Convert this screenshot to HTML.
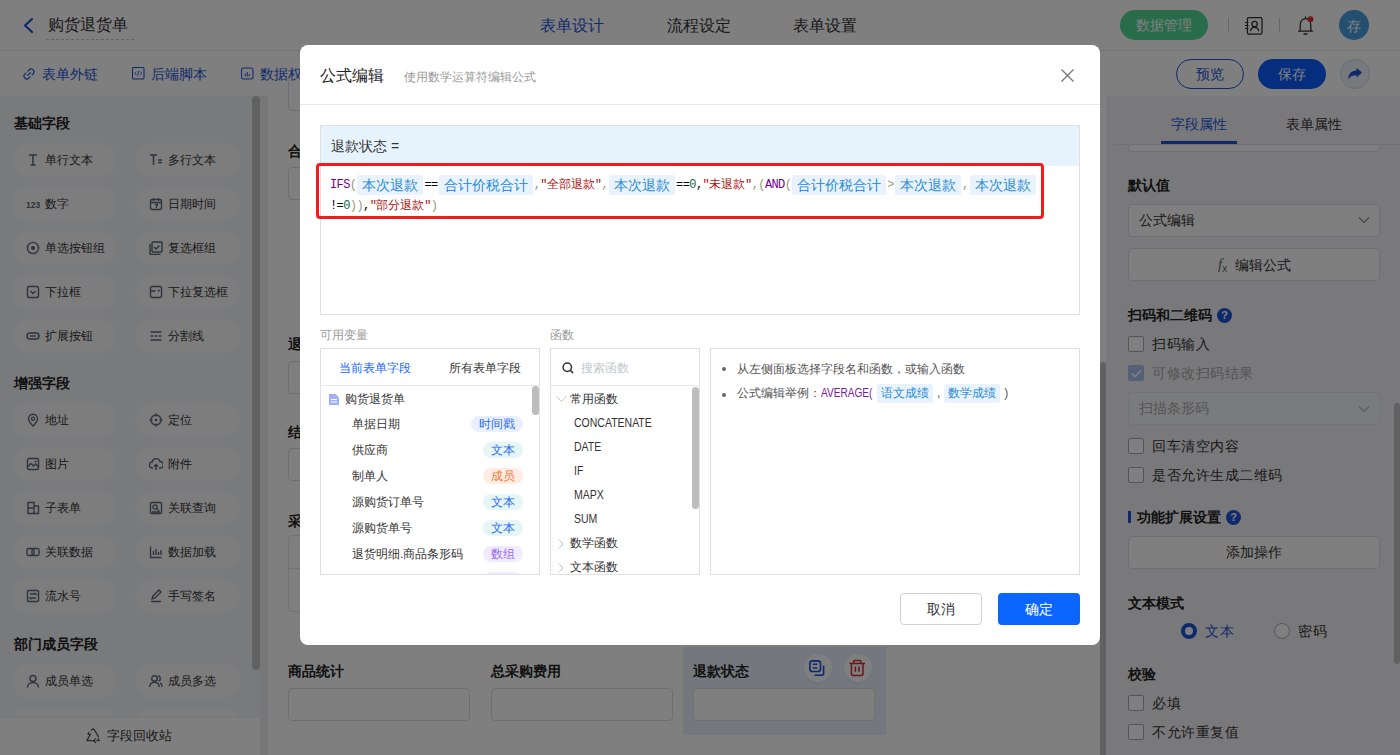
<!DOCTYPE html>
<html><head><meta charset="utf-8">
<style>
*{box-sizing:border-box;margin:0;padding:0}
html,body{width:1400px;height:755px;overflow:hidden;background:#fff;font-family:"Liberation Sans",sans-serif;color:#333}
.a{position:absolute}
svg{display:block}
/* header */
#hdr{left:0;top:0;width:1400px;height:51px;background:#fff;border-bottom:1px solid #e6e6e6}
#tb{left:0;top:51px;width:1400px;height:45px;background:#fff}
.lnk{font-size:14px;color:#1d55d8;line-height:20px}
/* sidebar */
#side{left:0;top:96px;width:268px;height:659px;background:#f2f4f7}
.sh{font-size:14px;font-weight:bold;color:#222;line-height:16px}
.pill{width:105px;height:34px;border-radius:17px;background:#fbfbfc;font-size:12px;color:#333;line-height:34px}
.pill .ic{position:absolute;left:14px;top:10px;width:14px;height:14px}
.pill span{position:absolute;left:33px;top:0}
/* canvas */
#canvas{left:268px;top:96px;width:838px;height:659px;background:#fff}
.lbl{font-size:14px;font-weight:bold;color:#222;line-height:16px}
.inp{border:1px solid #dcdfe6;border-radius:4px;height:33px}
/* right */
#rp{left:1106px;top:96px;width:294px;height:659px;background:#f2f3f6}
.rt{font-size:14px;font-weight:bold;color:#222;line-height:16px}
.cb{width:16px;height:16px;border:1px solid #a8abb2;border-radius:2px;background:#fff}
.ct{font-size:14px;letter-spacing:0.5px;color:#333;line-height:16px}
#mask{left:0;top:0;width:1400px;height:755px;background:rgba(0,0,0,0.5)}
/* modal */
#modal{left:300px;top:45px;width:800px;height:600px;background:#fff;border-radius:8px;overflow:hidden}
.m{position:absolute}
.mono{font-family:"Liberation Mono",monospace;font-size:12px;letter-spacing:-0.6px}
.tok{display:inline-block;letter-spacing:0;margin:0 1px;background:#e8f3fd;color:#2a8ad4;font-family:"Liberation Sans",sans-serif;font-size:14px;height:20px;line-height:20px;padding:0 5px;border-radius:2px;vertical-align:top}
.kw{color:#770088}.br{color:#999977}.st{color:#aa1111}.nu{color:#116644}
.tag{position:absolute;right:16px;height:16px;line-height:16px;font-size:12px;border-radius:8px;padding:0 8px}
.vi{position:absolute;left:31px;font-size:12px;color:#333;line-height:16px}
.fi{position:absolute;left:23px;font-size:12px;color:#333;line-height:16px}
</style></head><body>

<!-- HEADER -->
<div id="hdr" class="a">
  <svg class="a" style="left:22px;top:17px" width="12" height="17" viewBox="0 0 12 17"><path d="M10 2 L3 8.5 L10 15" fill="none" stroke="#1d55d8" stroke-width="2.2" stroke-linecap="round" stroke-linejoin="round"/></svg>
  <div class="a" style="left:48px;top:14px;font-size:16px;line-height:22px;color:#333">购货退货单</div>
  <div class="a" style="left:46px;top:39px;width:88px;border-top:1px dashed #c8c8c8"></div>
  <div class="a" style="left:540px;top:15px;font-size:16px;line-height:22px;color:#1d55d8">表单设计</div>
  <div class="a" style="left:667px;top:15px;font-size:16px;line-height:22px;color:#333">流程设定</div>
  <div class="a" style="left:793px;top:15px;font-size:16px;line-height:22px;color:#333">表单设置</div>
  <div class="a" style="left:1120px;top:10px;width:88px;height:30px;border-radius:15px;background:#52d895;color:#fff;font-size:14px;line-height:30px;text-align:center">数据管理</div>
  <div class="a" style="left:1228px;top:18px;width:1px;height:14px;background:#ccc"></div>
  <svg class="a" style="left:1244px;top:16px" width="20" height="20" viewBox="0 0 20 20"><rect x="3.4" y="1.6" width="14.6" height="16.6" rx="1.6" fill="none" stroke="#333" stroke-width="1.3"/><circle cx="10.6" cy="8" r="2.7" fill="none" stroke="#333" stroke-width="1.3"/><path d="M6.4 15.2c0.4-2.6 2-3.8 4.2-3.8s3.8 1.2 4.2 3.8" fill="none" stroke="#333" stroke-width="1.3"/><path d="M1 6.5h3.4M1 9.5h3.4M1 12.5h3.4" stroke="#333" stroke-width="1.2"/></svg>
  <div class="a" style="left:1279px;top:18px;width:1px;height:14px;background:#ccc"></div>
  <svg class="a" style="left:1296px;top:15px" width="20" height="20" viewBox="0 0 20 20"><path d="M4.2 16V9.8C4.2 6.2 6.4 3.6 9.5 3.6s5.3 2.6 5.3 6.2V16M2.6 16.2h13.8M9.5 1.8v1.6M8 19h3" fill="none" stroke="#333" stroke-width="1.3" stroke-linecap="round"/><circle cx="14.5" cy="4.2" r="3" fill="#e0332d"/></svg>
  <div class="a" style="left:1339px;top:10px;width:30px;height:30px;border-radius:15px;background:#4a9fe0;color:#fff;font-size:14px;line-height:32px;text-align:center">存</div>
</div>

<!-- TOOLBAR -->
<div id="tb" class="a">
  <svg class="a" style="left:22px;top:16px" width="14" height="14" viewBox="0 0 14 14"><g transform="rotate(-45 7 7)"><path d="M5.6 4.2H3.9A2.8 2.8 0 0 0 3.9 9.8H5.6M8.4 4.2H10.1A2.8 2.8 0 0 1 10.1 9.8H8.4M5 7H9" fill="none" stroke="#1d55d8" stroke-width="1.15" stroke-linecap="round"/></g></svg>
  <div class="a lnk" style="left:42px;top:13px">表单外链</div>
  <svg class="a" style="left:132px;top:16px" width="13" height="13" viewBox="0 0 13 13"><rect x="0.5" y="0.5" width="11.5" height="11.5" rx="1" fill="none" stroke="#1d55d8" stroke-width="1.05"/><path d="M4.3 4.6L2.6 6.3l1.7 1.7M8.2 4.6l1.7 1.7-1.7 1.7M7 3.8L5.5 8.8" fill="none" stroke="#1d55d8" stroke-width="0.85"/></svg>
  <div class="a lnk" style="left:151px;top:13px">后端脚本</div>
  <svg class="a" style="left:241px;top:16px" width="13" height="13" viewBox="0 0 13 13"><rect x="0.5" y="1" width="11.5" height="11" rx="2" fill="none" stroke="#1d55d8" stroke-width="1.05"/><path d="M4.3 6.5v2.8M6.25 5v4.3M8.2 7v2.3" stroke="#1d55d8" stroke-width="1"/></svg>
  <div class="a lnk" style="left:260px;top:13px">数据权限</div>
  <div class="a" style="left:1176px;top:8px;width:68px;height:30px;border-radius:15px;border:1px solid #1d55d8;color:#1d55d8;font-size:14px;line-height:28px;text-align:center">预览</div>
  <div class="a" style="left:1258px;top:8px;width:68px;height:30px;border-radius:15px;background:#0a5cff;color:#fff;font-size:14px;line-height:30px;text-align:center">保存</div>
  <div class="a" style="left:1340px;top:8px;width:30px;height:30px;border-radius:15px;border:1px solid #ccd7f0;background:#eef2f9"></div>
  <svg class="a" style="left:1347px;top:16px" width="16" height="14" viewBox="0 0 16 14"><path d="M15 5.5 L9.5 0.8 V3.5 C4 3.8 1.5 7 1 12.5 C3 9.5 5.5 8.2 9.5 8.2 V10.5 Z" fill="#1d55d8"/></svg>
</div>

<!-- SIDEBAR -->
<div id="side" class="a">
<div class="a sh" style="left:14px;top:19px">基础字段</div>
<div class="a pill" style="left:12px;top:47px"><svg class="ic" width="14" height="14" viewBox="0 0 14 14"><path d="M3 2h8M7 2v10M4.5 12h5" stroke="#5f6678" stroke-width="1.5" fill="none"/></svg><span>单行文本</span></div>
<div class="a pill" style="left:135px;top:47px"><svg class="ic" width="14" height="14" viewBox="0 0 14 14"><path d="M1 2h7M4.5 2v10M9 7h4M9 9.5h4" stroke="#5f6678" stroke-width="1.5" fill="none"/></svg><span>多行文本</span></div>
<div class="a pill" style="left:12px;top:91px"><svg class="ic" width="14" height="14" viewBox="0 0 14 14"><text x="0" y="11" font-size="8.5" font-weight="bold" fill="#5f6678" font-family="Liberation Sans">123</text></svg><span>数字</span></div>
<div class="a pill" style="left:135px;top:91px"><svg class="ic" width="14" height="14" viewBox="0 0 14 14"><rect x="1.5" y="2.5" width="11" height="10" rx="1.5" fill="none" stroke="#5f6678" stroke-width="1.4"/><path d="M1.5 5.5h11M4.5 1v3M9.5 1v3M6 7.5h2.5L7 11" stroke="#5f6678" stroke-width="1.3" fill="none"/></svg><span>日期时间</span></div>
<div class="a pill" style="left:12px;top:135px"><svg class="ic" width="14" height="14" viewBox="0 0 14 14"><circle cx="7" cy="7" r="5.6" fill="none" stroke="#5f6678" stroke-width="1.4"/><circle cx="7" cy="7" r="2" fill="#5f6678"/></svg><span>单选按钮组</span></div>
<div class="a pill" style="left:135px;top:135px"><svg class="ic" width="14" height="14" viewBox="0 0 14 14"><path d="M1 3v9.5a1 1 0 0 0 1 1h9.5" fill="none" stroke="#5f6678" stroke-width="1.4"/><rect x="3" y="1" width="10" height="10" rx="1" fill="none" stroke="#5f6678" stroke-width="1.4"/><path d="M5 6l2 2 3.5-3.5" fill="none" stroke="#5f6678" stroke-width="1.4"/></svg><span>复选框组</span></div>
<div class="a pill" style="left:12px;top:179px"><svg class="ic" width="14" height="14" viewBox="0 0 14 14"><rect x="1.5" y="1.5" width="11" height="11" rx="1.5" fill="none" stroke="#5f6678" stroke-width="1.4"/><path d="M4.5 6l2.5 2.5L9.5 6" fill="none" stroke="#5f6678" stroke-width="1.4"/></svg><span>下拉框</span></div>
<div class="a pill" style="left:135px;top:179px"><svg class="ic" width="14" height="14" viewBox="0 0 14 14"><rect x="1.5" y="1.5" width="11" height="11" rx="1.5" fill="none" stroke="#5f6678" stroke-width="1.4"/><path d="M1.5 6h5M9 6.5l1.5-1.5" fill="none" stroke="#5f6678" stroke-width="1.4"/></svg><span>下拉复选框</span></div>
<div class="a pill" style="left:12px;top:223px"><svg class="ic" width="14" height="14" viewBox="0 0 14 14"><rect x="1" y="4" width="12" height="6" rx="3" fill="none" stroke="#5f6678" stroke-width="1.5"/><path d="M4 7h6" stroke="#5f6678" stroke-width="1.4"/></svg><span>扩展按钮</span></div>
<div class="a pill" style="left:135px;top:223px"><svg class="ic" width="14" height="14" viewBox="0 0 14 14"><path d="M1.5 3h11M1.5 7h3M6 7h2M9.5 7h3M1.5 11h11" stroke="#5f6678" stroke-width="1.4"/></svg><span>分割线</span></div>
<div class="a sh" style="left:14px;top:279px">增强字段</div>
<div class="a pill" style="left:12px;top:307px"><svg class="ic" width="14" height="14" viewBox="0 0 14 14"><path d="M7 13s-4.5-4.3-4.5-7.3a4.5 4.5 0 0 1 9 0C11.5 8.7 7 13 7 13z" fill="none" stroke="#5f6678" stroke-width="1.4"/><circle cx="7" cy="5.7" r="1.6" fill="none" stroke="#5f6678" stroke-width="1.3"/></svg><span>地址</span></div>
<div class="a pill" style="left:135px;top:307px"><svg class="ic" width="14" height="14" viewBox="0 0 14 14"><circle cx="7" cy="7" r="5" fill="none" stroke="#5f6678" stroke-width="1.4"/><circle cx="7" cy="7" r="1.3" fill="#5f6678"/><path d="M7 0.5v3M7 10.5v3M0.5 7h3M10.5 7h3" stroke="#5f6678" stroke-width="1.4"/></svg><span>定位</span></div>
<div class="a pill" style="left:12px;top:351px"><svg class="ic" width="14" height="14" viewBox="0 0 14 14"><rect x="1.5" y="1.5" width="11" height="11" rx="1.5" fill="none" stroke="#5f6678" stroke-width="1.4"/><path d="M1.5 10l3.5-3.5 2.5 2.5 2-2 3 3" fill="none" stroke="#5f6678" stroke-width="1.3"/><circle cx="9.5" cy="4.5" r="1" fill="#5f6678"/></svg><span>图片</span></div>
<div class="a pill" style="left:135px;top:351px"><svg class="ic" width="14" height="14" viewBox="0 0 14 14"><path d="M4 11H3.5a3 3 0 0 1-.3-6A4 4 0 0 1 11 4.5a3 3 0 0 1 0 6.5H10" fill="none" stroke="#5f6678" stroke-width="1.4"/><path d="M7 13V7.5M5 9.5l2-2 2 2" fill="none" stroke="#5f6678" stroke-width="1.4"/></svg><span>附件</span></div>
<div class="a pill" style="left:12px;top:395px"><svg class="ic" width="14" height="14" viewBox="0 0 14 14"><path d="M2 1.5h6v11H2zM2 7h6M8 5h4.5v7.5H8" fill="none" stroke="#5f6678" stroke-width="1.4"/></svg><span>子表单</span></div>
<div class="a pill" style="left:135px;top:395px"><svg class="ic" width="14" height="14" viewBox="0 0 14 14"><rect x="1.5" y="1.5" width="11" height="11" rx="1" fill="none" stroke="#5f6678" stroke-width="1.4"/><circle cx="6" cy="6" r="2.2" fill="none" stroke="#5f6678" stroke-width="1.3"/><path d="M7.6 7.6l2.5 2.5M3 11h8" stroke="#5f6678" stroke-width="1.3"/></svg><span>关联查询</span></div>
<div class="a pill" style="left:12px;top:439px"><svg class="ic" width="14" height="14" viewBox="0 0 14 14"><rect x="1" y="3.5" width="7" height="7" rx="1.5" fill="none" stroke="#5f6678" stroke-width="1.4"/><rect x="6" y="3.5" width="7" height="7" rx="1.5" fill="none" stroke="#5f6678" stroke-width="1.4"/></svg><span>关联数据</span></div>
<div class="a pill" style="left:135px;top:439px"><svg class="ic" width="14" height="14" viewBox="0 0 14 14"><path d="M1.5 1.5v11h11M4.5 10V6M7 10V4M9.5 10V7M12 10V5" fill="none" stroke="#5f6678" stroke-width="1.4"/></svg><span>数据加载</span></div>
<div class="a pill" style="left:12px;top:483px"><svg class="ic" width="14" height="14" viewBox="0 0 14 14"><rect x="1.5" y="1.5" width="11" height="11" rx="1" fill="none" stroke="#5f6678" stroke-width="1.4"/><path d="M4 5h6l-1.5-1.3M10 9H4l1.5 1.3" fill="none" stroke="#5f6678" stroke-width="1.3"/></svg><span>流水号</span></div>
<div class="a pill" style="left:135px;top:483px"><svg class="ic" width="14" height="14" viewBox="0 0 14 14"><path d="M2 12.5h10M3 10l1-3 6-6 2 2-6 6z" fill="none" stroke="#5f6678" stroke-width="1.4"/></svg><span>手写签名</span></div>
<div class="a sh" style="left:14px;top:540px">部门成员字段</div>
<div class="a pill" style="left:12px;top:568px"><svg class="ic" width="14" height="14" viewBox="0 0 14 14"><circle cx="7" cy="4.5" r="3" fill="none" stroke="#5f6678" stroke-width="1.4"/><path d="M1.5 13.5c0-3 2.5-5 5.5-5s5.5 2 5.5 5" fill="none" stroke="#5f6678" stroke-width="1.4"/></svg><span>成员单选</span></div>
<div class="a pill" style="left:135px;top:568px"><svg class="ic" width="14" height="14" viewBox="0 0 14 14"><circle cx="5.5" cy="4.5" r="2.8" fill="none" stroke="#5f6678" stroke-width="1.4"/><path d="M0.8 13c0-2.8 2-4.6 4.7-4.6s4.7 1.8 4.7 4.6M9 1.8a2.8 2.8 0 0 1 .5 5.4M11 8.8c1.3.7 2.2 2.1 2.2 4" fill="none" stroke="#5f6678" stroke-width="1.4"/></svg><span>成员多选</span></div>
<div class="a pill" style="left:12px;top:612px"><svg class="ic" width="14" height="14" viewBox="0 0 14 14"><circle cx="7" cy="4.5" r="3" fill="none" stroke="#5f6678" stroke-width="1.4"/><path d="M1.5 13.5c0-3 2.5-5 5.5-5s5.5 2 5.5 5" fill="none" stroke="#5f6678" stroke-width="1.4"/></svg><span>部门单选</span></div>
<div class="a pill" style="left:135px;top:612px"><svg class="ic" width="14" height="14" viewBox="0 0 14 14"><circle cx="5.5" cy="4.5" r="2.8" fill="none" stroke="#5f6678" stroke-width="1.4"/><path d="M0.8 13c0-2.8 2-4.6 4.7-4.6s4.7 1.8 4.7 4.6M9 1.8a2.8 2.8 0 0 1 .5 5.4M11 8.8c1.3.7 2.2 2.1 2.2 4" fill="none" stroke="#5f6678" stroke-width="1.4"/></svg><span>部门多选</span></div>
<div class="a" style="left:252px;top:0;width:8px;height:574px;border-radius:4px;background:#c2c2c4"></div>
<div class="a" style="left:260px;top:0;width:8px;height:659px;background:#eceff3"></div>
<div class="a" style="left:0;top:621px;width:260px;height:38px;background:#fff;border-top:1px solid #eee"></div>
<svg class="a" style="left:85px;top:632px" width="16" height="16" viewBox="0 0 16 16"><path d="M6.3 2.2L8 0.8l1.7 1.4M8 1v0M9.8 2.5l3.6 6.2M12 12.5h2.2l-1-1.8M4.2 12.5H1.8l3.7-6.4M5 6.5l-2-.3.8-1.8M10.5 14.5l-1.7-1.8 1.7-1.8M8.8 12.7h-4" fill="none" stroke="#555" stroke-width="1.3" stroke-linejoin="round" stroke-linecap="round"/></svg>
<div class="a" style="left:107px;top:631px;font-size:13px;line-height:18px;color:#333">字段回收站</div>
</div>

<!-- CANVAS -->
<div id="canvas" class="a">
<div class="a inp" style="left:20px;top:-18px;width:182px"></div>
<div class="a lbl" style="left:20px;top:47px">合计价税合计</div>
<div class="a inp" style="left:20px;top:70.5px;width:182px"></div>
<div class="a lbl" style="left:20px;top:240px">退货原因</div>
<div class="a inp" style="left:20px;top:265px;width:182px"></div>
<div class="a lbl" style="left:20px;top:328px">结算账户</div>
<div class="a inp" style="left:20px;top:352px;width:182px"></div>
<div class="a lbl" style="left:20px;top:417px">采购明细</div>
<div class="a" style="left:20px;top:439px;width:790px;height:77px;border:1px solid #e4e6eb;border-radius:4px"></div>
<div class="a" style="left:20px;top:472px;width:790px;height:1px;background:#e4e6eb"></div>
<div class="a" style="left:415px;top:551px;width:203px;height:88px;background:#e9effb"></div>
<div class="a lbl" style="left:20px;top:567px">商品统计</div>
<div class="a inp" style="left:20px;top:592px;width:182px;background:#fff"></div>
<div class="a lbl" style="left:223px;top:567px">总采购费用</div>
<div class="a inp" style="left:223px;top:592px;width:182px;background:#fff"></div>
<div class="a lbl" style="left:425px;top:567px">退款状态</div>
<div class="a inp" style="left:425px;top:592px;width:182px;background:#fff"></div>
<div class="a" style="left:536px;top:558px;width:28px;height:28px;border-radius:14px;background:#fff;box-shadow:0 1px 3px rgba(0,0,0,.08)"></div>
<svg class="a" style="left:541px;top:564px" width="17" height="17" viewBox="0 0 17 17"><rect x="0.9" y="0.9" width="10.6" height="10.6" rx="2.6" fill="none" stroke="#1a4fe0" stroke-width="1.6"/><path d="M3.8 4.3h4.6M3.8 8h4.6" stroke="#1a4fe0" stroke-width="1.5"/><path d="M14.6 5.6v7.6a2 2 0 0 1-2 2H5.6" fill="none" stroke="#1a4fe0" stroke-width="1.6"/></svg>
<div class="a" style="left:576px;top:558px;width:28px;height:28px;border-radius:14px;background:#fff;box-shadow:0 1px 3px rgba(0,0,0,.08)"></div>
<svg class="a" style="left:581px;top:563px" width="17" height="18" viewBox="0 0 17 18"><path d="M0.5 4.6h15.5M4.6 4.6V2.4a1 1 0 0 1 1-1h5.2a1 1 0 0 1 1 1v2.2M2.4 4.6v10a2 2 0 0 0 2 2h7.6a2 2 0 0 0 2-2v-10M6.4 7.6v5.2M10 7.6v5.2" fill="none" stroke="#e0262e" stroke-width="1.5"/></svg>
<div class="a" style="left:832px;top:266px;width:6px;height:393px;border-radius:3px 3px 0 0;background:#c2c2c4"></div>
</div>

<!-- RIGHT PANEL -->
<div id="rp" class="a">
<div class="a" style="left:65px;top:20px;font-size:14px;line-height:16px;color:#1d55d8">字段属性</div>
<div class="a" style="left:180px;top:20px;font-size:14px;line-height:16px;color:#333">表单属性</div>
<div class="a" style="left:22px;top:26px;width:252px;height:30px;border:1px solid #dcdfe6;border-radius:4px;background:#fff"></div>
<div class="a" style="left:0;top:0;width:294px;height:49px;background:#f2f3f6"></div><div class="a" style="left:8px;top:48px;width:286px;height:1px;background:#dfe1e6"></div>
<div class="a" style="left:65px;top:20px;font-size:14px;line-height:16px;color:#1d55d8">字段属性</div>
<div class="a" style="left:180px;top:20px;font-size:14px;line-height:16px;color:#333">表单属性</div>
<div class="a" style="left:55px;top:45px;width:76px;height:3px;background:#1d55d8"></div>
<div class="a rt" style="left:22px;top:81px">默认值</div>
<div class="a" style="left:22px;top:108px;width:252px;height:33px;border:1px solid #dcdfe6;border-radius:4px;background:#fff;font-size:14px;line-height:31px;padding-left:10px;color:#333">公式编辑</div>
<svg class="a" style="left:252px;top:120px" width="12" height="8" viewBox="0 0 12 8"><path d="M1 1.5l5 5 5-5" fill="none" stroke="#888" stroke-width="1.2"/></svg>
<div class="a" style="left:22px;top:152px;width:252px;height:33px;border:1px solid #dcdfe6;border-radius:4px;background:#fff"></div>
<div class="a" style="left:112px;top:160px;font-size:15px;line-height:16px;color:#666;font-family:'Liberation Serif',serif;font-style:italic">f<sub style="font-size:10px;font-style:normal;font-family:'Liberation Sans',sans-serif;vertical-align:-3px">x</sub></div>
<div class="a" style="left:129px;top:161px;font-size:14px;line-height:16px;color:#333">编辑公式</div>
<div class="a rt" style="left:22px;top:211px">扫码和二维码</div>
<div class="a" style="left:111px;top:212px;width:15px;height:15px;border-radius:8px;background:#1d55d8;color:#fff;font-size:11px;font-weight:bold;line-height:15px;text-align:center">?</div>
<div class="a cb" style="left:22px;top:240px"></div>
<div class="a ct" style="left:46px;top:240px">扫码输入</div>
<div class="a cb" style="left:22px;top:269px;background:#a9bff0;border-color:#a9bff0"></div><svg class="a" style="left:25px;top:273px" width="11" height="9" viewBox="0 0 11 9"><path d="M1 4.5l3 3 6-6" fill="none" stroke="#fff" stroke-width="1.6"/></svg>
<div class="a ct" style="left:46px;top:269px;color:#a8a8a8">可修改扫码结果</div>
<div class="a cb" style="left:22px;top:342px"></div>
<div class="a ct" style="left:46px;top:342px">回车清空内容</div>
<div class="a cb" style="left:22px;top:371px"></div>
<div class="a ct" style="left:46px;top:371px">是否允许生成二维码</div>
<div class="a cb" style="left:22px;top:599px"></div>
<div class="a ct" style="left:46px;top:599px">必填</div>
<div class="a cb" style="left:22px;top:628px"></div>
<div class="a ct" style="left:46px;top:628px">不允许重复值</div>
<div class="a" style="left:22px;top:296px;width:252px;height:33px;border:1px solid #e4e6eb;border-radius:4px;background:#f5f6f8;font-size:14px;line-height:31px;padding-left:10px;color:#aaa">扫描条形码</div>
<svg class="a" style="left:252px;top:309px" width="12" height="8" viewBox="0 0 12 8"><path d="M1 1.5l5 5 5-5" fill="none" stroke="#bbb" stroke-width="1.2"/></svg>
<div class="a" style="left:22px;top:415px;width:3px;height:12px;background:#1d55d8"></div>
<div class="a rt" style="left:31px;top:413px">功能扩展设置</div>
<div class="a" style="left:120px;top:414px;width:15px;height:15px;border-radius:8px;background:#1d55d8;color:#fff;font-size:11px;font-weight:bold;line-height:15px;text-align:center">?</div>
<div class="a" style="left:22px;top:440px;width:252px;height:33px;border:1px solid #dcdfe6;border-radius:4px;background:#fff;font-size:14px;line-height:31px;text-align:center;color:#333">添加操作</div>
<div class="a rt" style="left:22px;top:499px">文本模式</div>
<div class="a" style="left:75px;top:527px;width:16px;height:16px;border-radius:8px;border:4px solid #1d55d8;background:#fff"></div>
<div class="a ct" style="left:99px;top:527px;color:#1d55d8">文本</div>
<div class="a" style="left:168px;top:527px;width:16px;height:16px;border-radius:8px;border:1px solid #a8abb2;background:#fff"></div>
<div class="a ct" style="left:192px;top:527px">密码</div>
<div class="a rt" style="left:22px;top:570px">校验</div>
<div class="a" style="left:288px;top:307px;width:6px;height:261px;border-radius:3px;background:#c2c2c4"></div>
</div>

<div id="mask" class="a"></div>

<!-- MODAL -->
<div id="modal" class="a">
<div class="m" style="left:20px;top:20px;font-size:16px;line-height:22px;color:#222">公式编辑</div>
<div class="m" style="left:104px;top:24px;font-size:12px;line-height:16px;color:#999">使用数学运算符编辑公式</div>
<svg class="m" style="left:760px;top:23px" width="15" height="15" viewBox="0 0 15 15"><path d="M1.5 1.5l12 12M13.5 1.5l-12 12" stroke="#777" stroke-width="1.3"/></svg>
<div class="m" style="left:0;top:59px;width:800px;height:1px;background:#e8e8e8"></div>
<div class="m" style="left:20px;top:80px;width:760px;height:190px;border:1px solid #e0e0e0"></div>
<div class="m" style="left:21px;top:81px;width:758px;height:40px;background:#e6f3fd"></div>
<div class="m" style="left:31px;top:92px;font-size:14px;line-height:18px;color:#333">退款状态 =</div>
<div class="m mono" style="left:30px;top:130px;white-space:nowrap;line-height:20px;color:#000"><span class="kw">IFS</span><span class="br">(</span><span class="tok">本次退款</span>==<span class="tok">合计价税合计</span><span class="br">,</span><span class="st">"<span style="font-size:12px;letter-spacing:0">全部退款</span>"</span><span class="br">,</span><span class="tok">本次退款</span>==<span class="nu">0</span>,<span class="st">"<span style="font-size:12px;letter-spacing:0">未退款</span>"</span><span class="br">,(</span><span class="kw">AND</span><span class="br">(</span><span class="tok">合计价税合计</span><span class="br">&gt;</span><span class="tok">本次退款</span><span class="br">,</span><span class="tok">本次退款</span></div>
<div class="m mono" style="left:30px;top:151px;white-space:nowrap;line-height:20px;color:#000">!=<span class="nu">0</span><span class="br">))</span>,<span class="st">"<span style="font-size:12px;letter-spacing:0">部分退款</span>"</span><span class="br">)</span></div>
<div class="m" style="left:16px;top:118px;width:728px;height:56px;border:3px solid #f21c1c;border-radius:4px"></div>
<div class="m" style="left:20px;top:282px;font-size:12px;line-height:16px;color:#999">可用变量</div>
<div class="m" style="left:250px;top:282px;font-size:12px;line-height:16px;color:#999">函数</div>
<div class="m" style="left:20px;top:303px;width:220px;height:227px;border:1px solid #e0e0e0;overflow:hidden">
<div class="m" style="left:18px;top:11px;font-size:12px;line-height:16px;color:#1a66ff">当前表单字段</div>
<div class="m" style="left:128px;top:11px;font-size:12px;line-height:16px;color:#333">所有表单字段</div>
<div class="m" style="left:0;top:36px;width:218px;height:1px;background:#e6e6e6"></div>
<svg class="m" style="left:8px;top:45px" width="10" height="11" viewBox="0 0 10 11"><path d="M0 0h6.5L10 3.5V11H0z" fill="#9fb0f5"/><path d="M2 5.5h6M2 8h6" stroke="#fff" stroke-width="1"/></svg>
<div class="m" style="left:24px;top:42px;font-size:12px;line-height:16px;color:#333">购货退货单</div>
<div class="vi" style="top:67px">单据日期</div>
<div class="tag" style="top:67px;background:#e8f0ff;color:#2f6bf0">时间戳</div>
<div class="vi" style="top:93px">供应商</div>
<div class="tag" style="top:93px;background:#e5f6f6;color:#2f6bf0">文本</div>
<div class="vi" style="top:119px">制单人</div>
<div class="tag" style="top:119px;background:#ffede3;color:#f57a3b">成员</div>
<div class="vi" style="top:145px">源购货订单号</div>
<div class="tag" style="top:145px;background:#e5f6f6;color:#2f6bf0">文本</div>
<div class="vi" style="top:171px">源购货单号</div>
<div class="tag" style="top:171px;background:#e5f6f6;color:#2f6bf0">文本</div>
<div class="vi" style="top:197px">退货明细.商品条形码</div>
<div class="tag" style="top:197px;background:#f1ebff;color:#9b6cf0">数组</div>
<div class="vi" style="top:223px">退货明细.商品名称</div>
<div class="tag" style="top:223px;background:#f1ebff;color:#9b6cf0">数组</div>
<div class="m" style="left:211px;top:37px;width:7px;height:29px;border-radius:4px;background:#bdbdbd"></div>
</div>
<div class="m" style="left:250px;top:303px;width:150px;height:227px;border:1px solid #e0e0e0;overflow:hidden">
<svg class="m" style="left:11px;top:13px" width="12" height="12" viewBox="0 0 12 12"><circle cx="5.3" cy="5.3" r="4.2" fill="none" stroke="#333" stroke-width="1.5"/><path d="M8.3 8.3l2.8 2.8" stroke="#333" stroke-width="1.5"/></svg>
<div class="m" style="left:30px;top:11px;font-size:12px;line-height:16px;color:#c4c7cf">搜索函数</div>
<div class="m" style="left:0;top:36px;width:148px;height:1px;background:#e6e6e6"></div>
<svg class="m" style="left:5px;top:47px" width="11" height="7" viewBox="0 0 11 7"><path d="M0.5 0.5l5 5 5-5" fill="none" stroke="#c8c8c8" stroke-width="1"/></svg>
<div class="m" style="left:19px;top:42px;font-size:12px;line-height:16px;color:#333">常用函数</div>
<div class="fi" style="top:66px;font-size:12.5px;transform:scaleX(0.84);transform-origin:0 50%">CONCATENATE</div>
<div class="fi" style="top:90px;font-size:12.5px;transform:scaleX(0.84);transform-origin:0 50%">DATE</div>
<div class="fi" style="top:114px;font-size:12.5px;transform:scaleX(0.84);transform-origin:0 50%">IF</div>
<div class="fi" style="top:138px;font-size:12.5px;transform:scaleX(0.84);transform-origin:0 50%">MAPX</div>
<div class="fi" style="top:162px;font-size:12.5px;transform:scaleX(0.84);transform-origin:0 50%">SUM</div>
<svg class="m" style="left:7px;top:190px" width="6" height="10" viewBox="0 0 6 10"><path d="M0.5 0.5l4.5 4.5-4.5 4.5" fill="none" stroke="#c8c8c8" stroke-width="1"/></svg>
<div class="m" style="left:19px;top:186px;font-size:12px;line-height:16px;color:#333">数学函数</div>
<svg class="m" style="left:7px;top:214px" width="6" height="10" viewBox="0 0 6 10"><path d="M0.5 0.5l4.5 4.5-4.5 4.5" fill="none" stroke="#c8c8c8" stroke-width="1"/></svg>
<div class="m" style="left:19px;top:210px;font-size:12px;line-height:16px;color:#333">文本函数</div>
<div class="m" style="left:141px;top:38px;width:7px;height:122px;border-radius:4px;background:#bdbdbd"></div>
</div>
<div class="m" style="left:410px;top:303px;width:370px;height:227px;border:1px solid #e0e0e0;overflow:hidden">
<div class="m" style="left:11px;top:18px;width:4px;height:4px;border-radius:2px;background:#666"></div>
<div class="m" style="left:26px;top:12px;font-size:12px;line-height:16px;color:#555">从左侧面板选择字段名和函数，或输入函数</div>
<div class="m" style="left:11px;top:44px;width:4px;height:4px;border-radius:2px;background:#666"></div>
<div class="m" style="left:26px;top:35px;font-size:12px;line-height:19px;color:#555;white-space:nowrap">公式编辑举例：<span style="color:#7a1a9a;display:inline-block;transform:scaleX(0.84);transform-origin:0 50%;width:53px">AVERAGE(</span><span style="margin-left:3px"></span><span style="display:inline-block;background:#e8f3fd;color:#2a8ad4;padding:0 4px;height:19px;line-height:19px;border-radius:2px;vertical-align:top">语文成绩</span><span style="margin:0 4px">,</span><span style="display:inline-block;background:#e8f3fd;color:#2a8ad4;padding:0 4px;height:19px;line-height:19px;border-radius:2px;vertical-align:top">数学成绩</span><span style="margin-left:4px">)</span></div>
</div>
<div class="m" style="left:600px;top:548px;width:82px;height:32px;border:1px solid #d0d0d0;border-radius:4px;font-size:14px;line-height:30px;text-align:center;color:#333">取消</div>
<div class="m" style="left:698px;top:548px;width:82px;height:32px;border-radius:4px;background:#0a66ff;font-size:14px;line-height:32px;text-align:center;color:#fff">确定</div>
</div>

</body></html>
